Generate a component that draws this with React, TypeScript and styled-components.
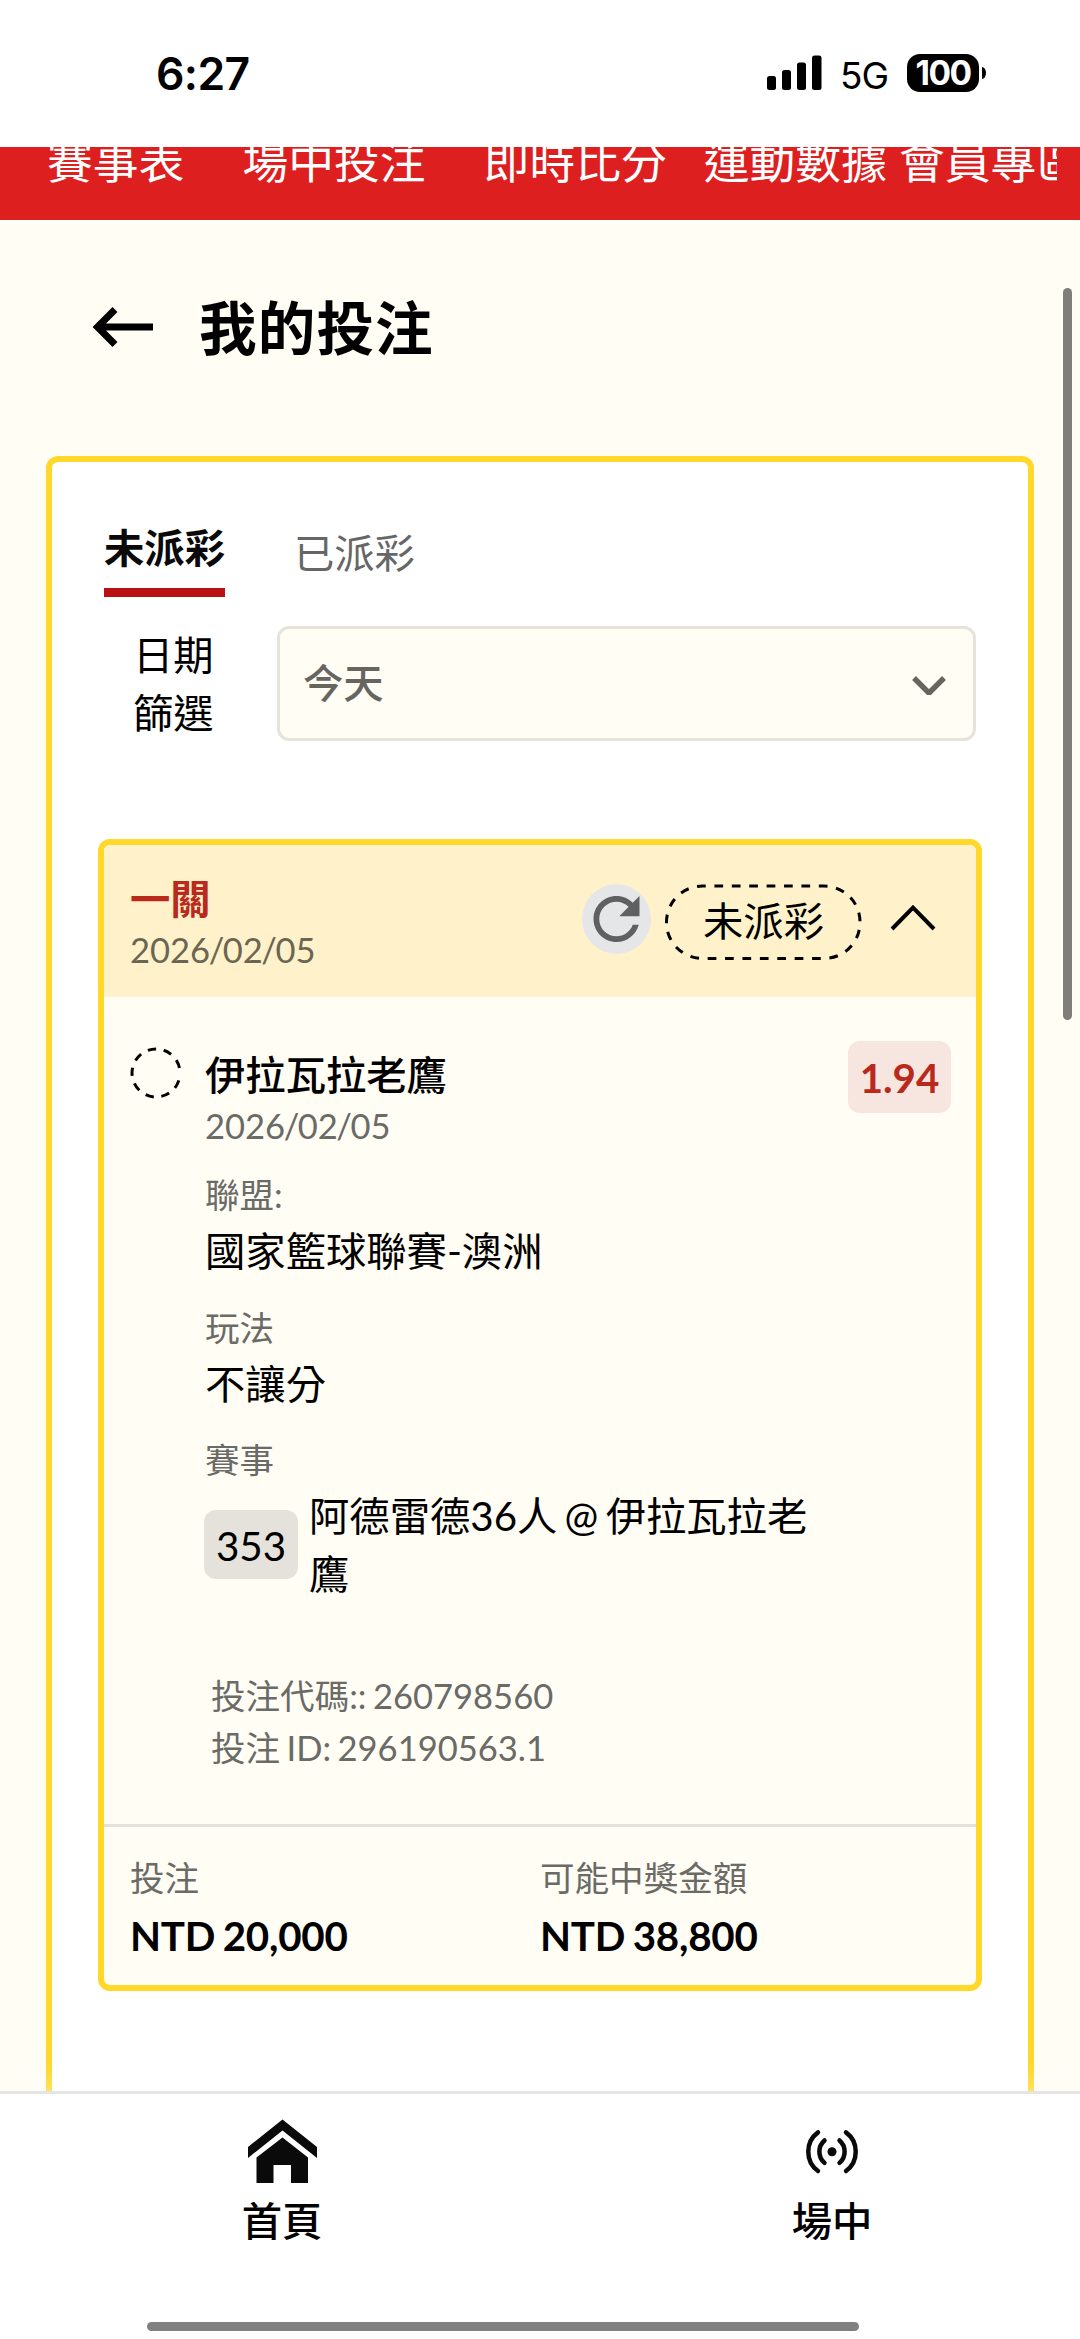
import React from "react";
import styled, { createGlobalStyle, css } from "styled-components";

const GlobalStyle = createGlobalStyle`
  * { box-sizing: border-box; }
  html, body { margin: 0; padding: 0; }
  body {
    background: #fffdf4;
    color: #000;
    font-family: Lato, "Noto Sans CJK TC", sans-serif;
    font-size: 40.32px;
    line-height: 57.6px;
    word-spacing: -0.075em;
  }
`;

const Screen = styled.div`
  position: relative;
  display: flex;
  flex-direction: column;
  width: 1080px;
  height: 2339px;
  overflow: hidden;
  background: #fffdf4;
`;

/* ---------- status bar ---------- */

const StatusBar = styled.header`
  display: flex;
  flex: none;
  justify-content: space-between;
  height: 147px;
  padding: 54px 94px 0 156px;
  background: #fff;
  font-family: Inter, sans-serif;
`;

const Clock = styled.span`
  font-size: 44.5px;
  font-weight: 600;
  line-height: 41px;
  letter-spacing: -0.6px;
`;

const StatusIcons = styled.div`
  display: flex;
  height: 38px;
`;

const SignalIcon = styled.svg`
  display: block;
  width: 55px;
  height: 36px;
`;

const NetworkLabel = styled.span`
  width: 67px;
  margin-left: 18px;
  font-size: 37px;
  font-weight: 400;
  line-height: 43px;
  letter-spacing: -1px;
`;

const Battery = styled.div`
  display: flex;
  align-items: center;
`;

const BatteryBody = styled.div`
  width: 72px;
  height: 38px;
  border-radius: 13px;
  background: #000;
  color: #fff;
  font-size: 33.5px;
  font-weight: 700;
  line-height: 38px;
  letter-spacing: -1.5px;
  text-align: center;
`;

const BatteryTip = styled.div`
  width: 4px;
  height: 12px;
  margin-left: 3px;
  border-radius: 0 4px 4px 0 / 0 6px 6px 0;
  background: #000;
`;

/* ---------- red navigation ---------- */

const NavBar = styled.nav`
  flex: none;
  height: 73px;
  padding: 0 23px 0 47px;
  background: #dd1f20;
`;

const NavTrack = styled.div`
  display: flex;
  align-items: flex-end;
  height: 73px;
  padding-bottom: 29px;
  overflow: hidden;
`;

const NavItem = styled.a<{ $gap: number }>`
  flex: none;
  margin-left: ${(p) => p.$gap}px;
  color: #fff;
  font-size: 45.8px;
  line-height: 58px;
  white-space: nowrap;
`;

/* ---------- page ---------- */

const Page = styled.main`
  flex: 1;
  min-height: 0;
  overflow: hidden;
  padding: 0 46px;
`;

const PageHeader = styled.div`
  display: flex;
  align-items: center;
  height: 236px;
  padding: 0 0 22px 46px;
`;

const BackIcon = styled.svg`
  display: block;
  width: 62px;
  height: 44px;
`;

const PageTitle = styled.h1`
  margin: 2px 0 0 45px;
  font-size: 57.6px;
  font-weight: 700;
  line-height: 80px;
  letter-spacing: 1.1px;
`;

const Panel = styled.section`
  height: 1800px;
  padding: 52px 52px 0 46px;
  border: 6px solid #ffd829;
  border-radius: 12px;
  background: #fff;
`;

const Tabs = styled.div`
  display: flex;
  align-items: flex-start;
  height: 112px;
  padding-left: 6px;
`;

const Tab = styled.button<{ $active?: boolean }>`
  display: flex;
  align-items: flex-start;
  margin: 0 69px 0 0;
  padding: 0;
  height: 83px;
  border: 0;
  background: none;
  font: inherit;
  color: #666;
  ${(p) =>
    p.$active
      ? css`
          padding-top: 5px;
          border-bottom: 9px solid #bb1011;
          color: #0a0a0a;
          font-weight: 700;
        `
      : css`
          padding-top: 10px;
        `}
`;

const FilterRow = styled.div`
  display: flex;
  height: 115px;
`;

const FilterLabel = styled.label`
  width: 81px;
  margin: 0 63px 0 35px;
`;

const Select = styled.div`
  display: flex;
  flex: 1;
  align-items: center;
  justify-content: space-between;
  padding: 0 26px 1px 23px;
  border: 3px solid #e6e3dc;
  border-radius: 12px;
  background: #fffdf4;
  color: #666560;
  font-weight: 500;
`;

const SelectChevron = styled.svg`
  display: block;
  width: 36px;
  height: 22px;
  margin-top: 5px;
`;

/* ---------- bet card ---------- */

const Card = styled.article`
  width: 884px;
  height: 1152px;
  margin-top: 98px;
  border: 6px solid #ffd829;
  border-radius: 12px;
  background: #fffdf4;
  overflow: hidden;
`;

const CardHeader = styled.div`
  display: flex;
  justify-content: space-between;
  height: 152px;
  padding: 28px 40px 0 26px;
  background: #fff2cb;
`;

const TitleLine = styled.div<{ $red?: boolean }>`
  color: ${(p) => (p.$red ? "#b9291c" : "#000")};
  font-weight: ${(p) => (p.$red ? 700 : 500)};
  line-height: 52px;
`;

const DateLine = styled.div<{ $warm?: boolean }>`
  color: ${(p) => (p.$warm ? "#6b6653" : "#6a6a67")};
  font-size: 34.56px;
  line-height: 50px;
`;

const Slash = styled.span`
  margin: 0 -1.5px;
`;

const HeaderActions = styled.div`
  display: flex;
  align-items: flex-start;
  padding-top: 11px;
`;

const RefreshButton = styled.button`
  display: flex;
  align-items: center;
  justify-content: center;
  width: 69px;
  height: 70px;
  padding: 0;
  border: 0;
  border-radius: 50%;
  background: #e4e6e8;
`;

const StatusPill = styled.div`
  position: relative;
  width: 197px;
  height: 77px;
  margin-left: 14px;
  line-height: 74px;
  text-align: center;
`;

const PillOutline = styled.svg`
  position: absolute;
  inset: 0;
  width: 197px;
  height: 77px;
`;

const ExpandIcon = styled.svg`
  display: block;
  width: 46px;
  height: 27px;
  margin: 20px 0 0 28px;
`;

const CardBody = styled.div`
  display: grid;
  grid-template-columns: 75px 1fr 103px;
  height: 830px;
  padding: 44px 25px 0 26px;
  border-bottom: 3px solid #e5e2dc;
`;

const PendingMark = styled.svg`
  display: block;
  width: 52px;
  height: 52px;
  margin: 6px 0 0 -0.5px;
`;

const Details = styled.div`
  padding-top: 8px;
`;

const Odds = styled.div`
  width: 103px;
  height: 72px;
  border-radius: 12px;
  background: #f7e6df;
  color: #b9291c;
  font-size: 40.32px;
  font-weight: 700;
  line-height: 73px;
  text-align: center;
`;

const Field = styled.div<{ $first?: boolean }>`
  margin-top: ${(p) => (p.$first ? 18 : 22)}px;
`;

const Label = styled.div`
  color: #6a6a67;
  font-size: 34.56px;
  line-height: 52px;
`;

const Value = styled.div`
  padding-top: 1px;
  line-height: 57.6px;
`;

const Match = styled.div`
  display: flex;
  align-items: center;
  width: 620px;
  margin: 1px 0 0 -1px;
`;

const MatchNo = styled.span`
  flex: none;
  width: 94px;
  height: 69px;
  margin-right: 11px;
  border-radius: 12px;
  background: #e5e2dc;
  line-height: 71px;
  text-align: center;
`;

const MatchName = styled.span`
  flex: none;
  width: 512px;
`;

const Codes = styled.div`
  padding: 68px 0 0 6px;
  word-spacing: -0.06em;
`;

const CardFooter = styled.footer`
  display: grid;
  grid-template-columns: 1fr 1fr;
  padding: 25px 0 0 26px;
`;

const FooterCell = styled.div<{ $shift?: number }>`
  margin-left: ${(p) => p.$shift || 0}px;
`;

const Amount = styled.div`
  margin-top: 3px;
  font-weight: 700;
  letter-spacing: -0.25px;
  word-spacing: -0.05em;
`;

/* ---------- bottom bar ---------- */

const BottomBar = styled.nav`
  position: relative;
  display: flex;
  flex: none;
  height: 248px;
  padding: 25px 0 0 182px;
  border-top: 3px solid #e5e5e5;
  background: #fff;
  box-shadow: 0 -4px 30px rgba(255, 255, 255, 0.4);
`;

const BottomItem = styled.a`
  display: flex;
  flex-direction: column;
  align-items: center;
  width: 200px;
  margin-right: 350px;
  flex: none;
  font-weight: 500;
`;

const BottomIcon = styled.svg`
  display: block;
  width: 72px;
  height: 64px;
  margin-bottom: 9px;
`;

const HomeIndicator = styled.div`
  position: absolute;
  left: 147px;
  bottom: 8px;
  width: 712px;
  height: 9px;
  border-radius: 5px;
  background: #808080;
`;

const ScrollThumb = styled.div`
  position: absolute;
  top: 288px;
  right: 8px;
  width: 9px;
  height: 732px;
  border-radius: 5px;
  background: #7f7e79;
`;

const navItems = [
  { text: "賽事表", gap: 0 },
  { text: "場中投注", gap: 58 },
  { text: "即時比分", gap: 58 },
  { text: "運動數據", gap: 37 },
  { text: "會員專區", gap: 12 },
];

function BetDate({ value, warm }: { value: string; warm?: boolean }) {
  const [year, month, day] = value.split("/");
  return (
    <DateLine $warm={warm}>
      {year}
      <Slash>/</Slash>
      {month}
      <Slash>/</Slash>
      {day}
    </DateLine>
  );
}

export default function App() {
  return (
    <>
      <GlobalStyle />
      <Screen lang="zh-TW">
        <StatusBar>
          <Clock>6:27</Clock>
          <StatusIcons>
            <SignalIcon viewBox="0 0 55 36">
              <rect x="0" y="22" width="9" height="14" rx="2.5" />
              <rect x="15" y="16" width="9" height="20" rx="2.5" />
              <rect x="30" y="8.5" width="9" height="27.5" rx="2.5" />
              <rect x="45" y="1.5" width="9.5" height="34.5" rx="2.5" />
            </SignalIcon>
            <NetworkLabel>5G</NetworkLabel>
            <Battery>
              <BatteryBody>100</BatteryBody>
              <BatteryTip />
            </Battery>
          </StatusIcons>
        </StatusBar>

        <NavBar>
          <NavTrack>
            {navItems.map((item) => (
              <NavItem key={item.text} $gap={item.gap}>
                {item.text}
              </NavItem>
            ))}
          </NavTrack>
        </NavBar>

        <Page>
          <PageHeader>
            <BackIcon viewBox="0 0 62 44" fill="none" stroke="#000" strokeWidth="7">
              <path d="M23 4.5 5.5 22 23 39.5M5.5 22H61" />
            </BackIcon>
            <PageTitle>我的投注</PageTitle>
          </PageHeader>

          <Panel>
            <Tabs>
              <Tab $active>未派彩</Tab>
              <Tab>已派彩</Tab>
            </Tabs>
            <FilterRow>
              <FilterLabel>日期篩選</FilterLabel>
              <Select>
                今天
                <SelectChevron viewBox="0 0 36 22" fill="none" stroke="#666560" strokeWidth="5.4">
                  <path d="M3 3 18 18 33 3" strokeLinejoin="bevel" />
                </SelectChevron>
              </Select>
            </FilterRow>

            <Card>
              <CardHeader>
                <div>
                  <TitleLine $red>一關</TitleLine>
                  <BetDate warm value="2026/02/05" />
                </div>
                <HeaderActions>
                  <RefreshButton aria-label="refresh">
                    <svg width="70" height="70" viewBox="0 0 24 24" fill="#5f6062">
                      <path d="M17.65 6.35C16.2 4.9 14.21 4 12 4c-4.42 0-7.99 3.58-7.99 8s3.57 8 7.99 8c3.73 0 6.84-2.55 7.73-6h-2.08c-.82 2.33-3.04 4-5.65 4-3.31 0-6-2.69-6-6s2.69-6 6-6c1.66 0 3.14.69 4.22 1.78L13 11h7V4l-2.35 2.35z" />
                    </svg>
                  </RefreshButton>
                  <StatusPill>
                    <PillOutline viewBox="0 0 197 77" fill="none" stroke="#000" strokeWidth="3">
                      <rect
                        x="1.5"
                        y="2"
                        width="193.5"
                        height="72.5"
                        rx="36"
                        pathLength="472.5"
                        strokeDasharray="8.75 8.75"
                        strokeDashoffset="5.5"
                      />
                    </PillOutline>
                    未派彩
                  </StatusPill>
                  <ExpandIcon viewBox="0 0 46 27" fill="none" stroke="#000" strokeWidth="4">
                    <path d="M2 25 23 3.5 44 25" />
                  </ExpandIcon>
                </HeaderActions>
              </CardHeader>

              <CardBody>
                <PendingMark viewBox="0 0 52 52" fill="none" stroke="#000" strokeWidth="3">
                  <circle cx="26" cy="26" r="24" strokeDasharray="8.4 7.7" strokeDashoffset="-7.5" />
                </PendingMark>
                <Details>
                  <TitleLine>伊拉瓦拉老鷹</TitleLine>
                  <BetDate value="2026/02/05" />
                  <Field $first>
                    <Label>聯盟:</Label>
                    <Value>國家籃球聯賽-澳洲</Value>
                  </Field>
                  <Field>
                    <Label>玩法</Label>
                    <Value>不讓分</Value>
                  </Field>
                  <Field>
                    <Label>賽事</Label>
                    <Match>
                      <MatchNo>353</MatchNo>
                      <MatchName>阿德雷德36人 @ 伊拉瓦拉老鷹</MatchName>
                    </Match>
                  </Field>
                  <Codes>
                    <Label>投注代碼:: 260798560</Label>
                    <Label>投注 ID: 296190563.1</Label>
                  </Codes>
                </Details>
                <Odds>1.94</Odds>
              </CardBody>

              <CardFooter>
                <FooterCell>
                  <Label>投注</Label>
                  <Amount>NTD 20,000</Amount>
                </FooterCell>
                <FooterCell $shift={-13}>
                  <Label>可能中獎金額</Label>
                  <Amount>NTD 38,800</Amount>
                </FooterCell>
              </CardFooter>
            </Card>
          </Panel>
        </Page>

        <BottomBar>
          <BottomItem>
            <BottomIcon viewBox="0 0 72 64" fill="#0a0a0a">
              <path d="M36.5.5 71 28v11L36.5 11.5 2 39V28Z" />
              <path d="M36.5 18.5 62 38.5V64H45V46H27.5V64H10.5V38.5Z" />
            </BottomIcon>
            首頁
          </BottomItem>
          <BottomItem>
            <BottomIcon viewBox="0 0 72 64" fill="none" stroke="#0a0a0a" strokeWidth="4.5" strokeLinecap="round">
              <circle cx="36" cy="32.7" r="4.5" fill="#0a0a0a" stroke="none" />
              <path d="M28.5 21.5A14.8 14.8 0 0 0 28.5 43.9M43.5 21.5A14.8 14.8 0 0 1 43.5 43.9" />
              <path d="M22 13.4A24 24 0 0 0 22 52M50 13.4A24 24 0 0 1 50 52" />
            </BottomIcon>
            場中
          </BottomItem>
          <HomeIndicator />
        </BottomBar>
        <ScrollThumb />
      </Screen>
    </>
  );
}
